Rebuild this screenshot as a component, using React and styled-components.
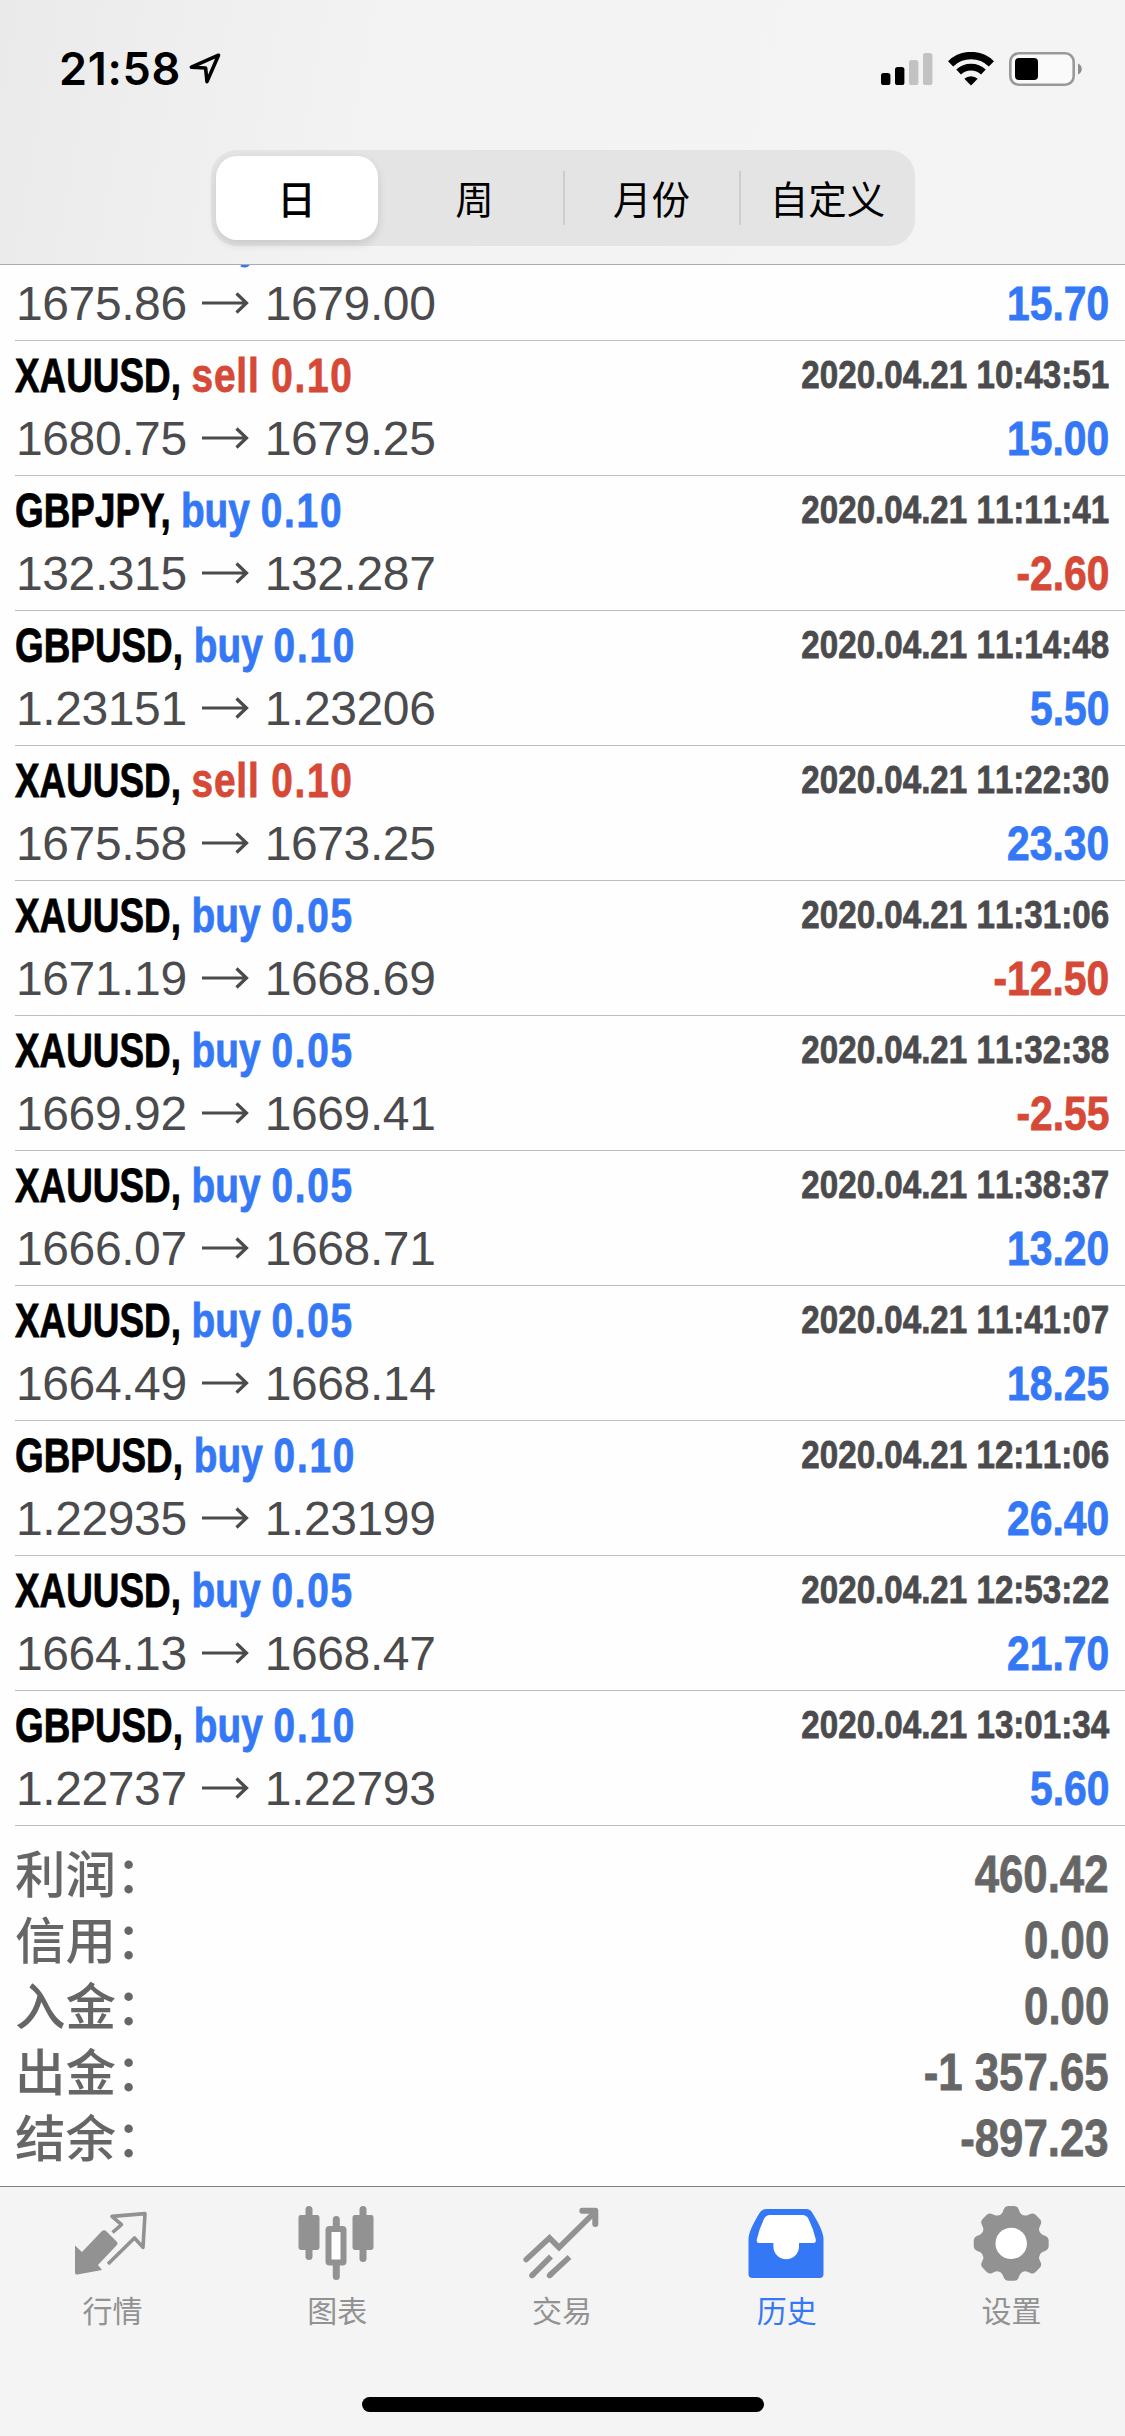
import React from "react";
import styled, { createGlobalStyle } from "styled-components";

const deals = [
  { symbol: "XAUUSD", side: "buy", volume: "0.05", open: "1675.86", close: "1679.00", time: "", profit: "15.70" },
  { symbol: "XAUUSD", side: "sell", volume: "0.10", open: "1680.75", close: "1679.25", time: "2020.04.21 10:43:51", profit: "15.00" },
  { symbol: "GBPJPY", side: "buy", volume: "0.10", open: "132.315", close: "132.287", time: "2020.04.21 11:11:41", profit: "-2.60" },
  { symbol: "GBPUSD", side: "buy", volume: "0.10", open: "1.23151", close: "1.23206", time: "2020.04.21 11:14:48", profit: "5.50" },
  { symbol: "XAUUSD", side: "sell", volume: "0.10", open: "1675.58", close: "1673.25", time: "2020.04.21 11:22:30", profit: "23.30" },
  { symbol: "XAUUSD", side: "buy", volume: "0.05", open: "1671.19", close: "1668.69", time: "2020.04.21 11:31:06", profit: "-12.50" },
  { symbol: "XAUUSD", side: "buy", volume: "0.05", open: "1669.92", close: "1669.41", time: "2020.04.21 11:32:38", profit: "-2.55" },
  { symbol: "XAUUSD", side: "buy", volume: "0.05", open: "1666.07", close: "1668.71", time: "2020.04.21 11:38:37", profit: "13.20" },
  { symbol: "XAUUSD", side: "buy", volume: "0.05", open: "1664.49", close: "1668.14", time: "2020.04.21 11:41:07", profit: "18.25" },
  { symbol: "GBPUSD", side: "buy", volume: "0.10", open: "1.22935", close: "1.23199", time: "2020.04.21 12:11:06", profit: "26.40" },
  { symbol: "XAUUSD", side: "buy", volume: "0.05", open: "1664.13", close: "1668.47", time: "2020.04.21 12:53:22", profit: "21.70" },
  { symbol: "GBPUSD", side: "buy", volume: "0.10", open: "1.22737", close: "1.22793", time: "2020.04.21 13:01:34", profit: "5.60" },
];

const totals = [
  { label: "利润", value: "460.42" },
  { label: "信用", value: "0.00" },
  { label: "入金", value: "0.00" },
  { label: "出金", value: "-1 357.65" },
  { label: "结余", value: "-897.23" },
];

const periods = ["日", "周", "月份", "自定义"];

const tabs = [
  { label: "行情", icon: <QuotesIcon /> },
  { label: "图表", icon: <ChartIcon /> },
  { label: "交易", icon: <TradeIcon /> },
  { label: "历史", icon: <HistoryIcon />, active: true },
  { label: "设置", icon: <SettingsIcon /> },
];

export default function App() {
  return (
    <Screen>
      <GlobalStyle />
      <Header>
        <StatusBar>
          <Clock>
            21:58
            <LocationIcon />
          </Clock>
          <Indicators>
            <SignalIcon />
            <WifiIcon />
            <BatteryIcon />
          </Indicators>
        </StatusBar>
        <Segments>
          {periods.map((period, i) => (
            <Segment key={period} $selected={i === 0} $divider={i > 1}>
              {period}
            </Segment>
          ))}
        </Segments>
      </Header>
      <History>
        <Deals>
          {deals.map((deal) => (
            <Deal key={deal.open}>
              <TitleLine>
                <Title>
                  <Symbol>{deal.symbol}, </Symbol>
                  <Side $sell={deal.side === "sell"}>
                    {deal.side} <Volume>{deal.volume}</Volume>
                  </Side>
                </Title>
                <Time>{deal.time}</Time>
              </TitleLine>
              <PriceLine>
                <Prices>
                  {deal.open}
                  <ArrowIcon />
                  {deal.close}
                </Prices>
                <Profit $loss={deal.profit.startsWith("-")}>{deal.profit}</Profit>
              </PriceLine>
            </Deal>
          ))}
        </Deals>
        <Totals>
          {totals.map((total) => (
            <Total key={total.label}>
              <TotalLabel>{total.label}：</TotalLabel>
              <TotalValue>{total.value}</TotalValue>
            </Total>
          ))}
        </Totals>
      </History>
      <TabBar>
        <TabList>
          {tabs.map((tab) => (
            <Tab key={tab.label} $active={tab.active}>
              {tab.icon}
              {tab.label}
            </Tab>
          ))}
        </TabList>
        <HomeIndicator />
      </TabBar>
    </Screen>
  );
}

function LocationIcon() {
  return (
    <svg width="32" height="32" viewBox="0 0 32 32" fill="none" stroke="#000" strokeWidth="3.6" strokeLinejoin="round">
      <path d="M29.5 3.2 L2.4 15.2 L16.6 16 L18 29.6 Z" />
    </svg>
  );
}

function SignalIcon() {
  return (
    <svg width="52" height="34" viewBox="0 0 52 34">
      <rect x="0" y="21" width="9.4" height="12" rx="2.6" fill="#000" />
      <rect x="14" y="15" width="9.4" height="18" rx="2.6" fill="#000" />
      <rect x="28" y="8" width="9.4" height="25" rx="2.6" fill="#c2c2c2" />
      <rect x="42" y="1" width="9.4" height="32" rx="2.6" fill="#c2c2c2" />
    </svg>
  );
}

function WifiIcon() {
  return (
    <svg width="46" height="34" viewBox="0 0 46 34" fill="none" stroke="#000">
      <path d="M2.6 11.8 A29.3 29.3 0 0 1 43.4 11.8" strokeWidth="7.4" />
      <path d="M10.6 20 A18 18 0 0 1 35.4 20" strokeWidth="6.8" />
      <path d="M16.3 26.8 A10 10 0 0 1 29.7 26.8 L23 33.6 Z" fill="#000" stroke="none" />
    </svg>
  );
}

function BatteryIcon() {
  return (
    <svg width="74" height="34" viewBox="0 0 74 34">
      <rect x="1.3" y="1.3" width="63.4" height="31.4" rx="8.5" fill="#fafafa" stroke="#999" strokeWidth="2.6" />
      <rect x="6" y="6" width="23" height="22" rx="4" fill="#000" />
      <path d="M69 11.5 C74 13.5 74 20.5 69 22.5 Z" fill="#8e8e8e" />
    </svg>
  );
}

function ArrowIcon() {
  return (
    <Arrow width="47" height="22" viewBox="0 0 47 22" fill="none" stroke="#4b4b4d" strokeWidth="3.2">
      <path d="M0 11 H44.5 M34.5 1.5 L44.5 11 L34.5 20.5" />
    </Arrow>
  );
}

function QuotesIcon() {
  return (
    <svg width="78" height="78" viewBox="0 0 78 78" fill="currentColor">
      <path d="M2 42.5 L9 49 L28.5 28.4 Q31 26 33.5 28.4 L43.6 38.4 Q45.4 40.5 43.4 42.6 L25 62 L29 67 L4.5 71.6 Q2 71.8 2 69.4 Z" />
      <path
        d="M39.5 29.5 L48.5 21.6 L39 13.4 L72 10.6 L70 44.4 L61.5 35 L35 61"
        fill="none"
        stroke="currentColor"
        strokeWidth="3.6"
        strokeLinejoin="round"
      />
    </svg>
  );
}

function ChartIcon() {
  return (
    <svg width="78" height="78" viewBox="0 0 78 78" fill="currentColor">
      <rect x="0.5" y="12" width="21" height="35" rx="2.4" />
      <rect x="7.5" y="3" width="7" height="54" rx="3.5" />
      <rect x="30.5" y="26" width="15" height="33.5" rx="1" fill="#fff" stroke="currentColor" strokeWidth="6" />
      <rect x="34.8" y="13" width="7" height="14" rx="3.5" />
      <rect x="34.8" y="58" width="7" height="19" rx="3.5" />
      <rect x="54.5" y="12" width="21" height="35" rx="2.4" />
      <rect x="61.5" y="3" width="7" height="56" rx="3.5" />
    </svg>
  );
}

function TradeIcon() {
  return (
    <svg width="78" height="78" viewBox="0 0 78 78" fill="none" stroke="currentColor" strokeWidth="5.6">
      <path d="M3.2 56.5 L26.5 35 L36 44.5 L70 11" strokeLinecap="round" />
      <path d="M59.3 7.8 H72.3 V21" strokeWidth="6" strokeLinecap="round" strokeLinejoin="round" />
      <path d="M9 72.4 L28 53.5 M26.6 72.4 L46.5 54" />
      <path d="M9 72.4 L10 71.4 M26.6 72.4 L27.6 71.4" strokeLinecap="round" />
    </svg>
  );
}

function HistoryIcon() {
  return (
    <svg width="78" height="78" viewBox="0 0 78 78" fill="currentColor">
      <path d="M19 6 H58 Q62.4 6 64.5 10 Q75.5 28 75.5 36 V71 Q75.5 75 71.5 75 H4.5 Q0.5 75 0.5 71 V36 Q0.5 28 11.5 10 Q13.6 6 19 6 Z" />
      <path
        d="M22 12 H54.5 Q58.5 12 60.3 15.5 Q65.5 26 67.8 36.5 Q68.3 40 65.5 40 H51 V43.5 A12.8 12.8 0 0 1 25.4 43.5 V40 H11 Q8.2 40 8.8 36.5 Q11 26 16.2 15.5 Q18 12 22 12 Z"
        fill="#fff"
      />
    </svg>
  );
}

function SettingsIcon() {
  return (
    <svg width="78" height="78" viewBox="0 0 78 78">
      <path d={gearPath(38.2, 40.4)} fill="currentColor" />
      <circle cx="38.2" cy="40.4" r="15.7" fill="#fff" />
    </svg>
  );
}

// Outline of an eight-toothed gear with soft tips and valleys
function gearPath(cx, cy) {
  const at = (radius, degrees) => {
    const angle = (degrees * Math.PI) / 180;
    return `${(cx + radius * Math.cos(angle)).toFixed(2)} ${(cy + radius * Math.sin(angle)).toFixed(2)}`;
  };
  let d = `M${at(32, -16)}`;
  for (let a = 0; a < 360; a += 45) {
    d += ` L${at(35.2, a - 12)} Q${at(37.6, a - 10)} ${at(37.6, a - 5)}`;
    d += ` L${at(37.6, a + 5)} Q${at(37.6, a + 10)} ${at(35.2, a + 12)}`;
    d += ` L${at(32, a + 16)} Q${at(29.3, a + 22.5)} ${at(32, a + 29)}`;
  }
  return `${d} Z`;
}

const GlobalStyle = createGlobalStyle`
  body {
    margin: 0;
    background: #fefefe;
  }
`;

const Screen = styled.div`
  display: flex;
  flex-direction: column;
  width: 1125px;
  height: 2436px;
  overflow: hidden;
  background: #fefefe;
  font-family: "Liberation Sans", "Noto Sans CJK SC", sans-serif;
  font-kerning: none;
`;

const Header = styled.header`
  box-sizing: border-box;
  display: flex;
  flex-direction: column;
  align-items: center;
  flex: none;
  height: 265px;
  border-bottom: 1px solid #ababad;
  background: linear-gradient(100deg, #eaeaea 0%, #eeeeee 14%, #f3f3f3 34%, #f4f4f5 100%);
`;

const StatusBar = styled.div`
  box-sizing: border-box;
  display: flex;
  justify-content: space-between;
  width: 100%;
  height: 150px;
  padding: 52px 42px 0 59px;
`;

const Clock = styled.div`
  display: flex;
  gap: 8px;
  height: 34px;
  line-height: 34px;
  font-family: Inter, sans-serif;
  font-size: 45px;
  font-weight: 600;
  letter-spacing: 0.7px;
`;

const Indicators = styled.div`
  display: flex;
  gap: 15px;
`;

const Segments = styled.div`
  box-sizing: border-box;
  display: grid;
  grid-template-columns: repeat(4, 176px);
  grid-template-rows: 84px;
  width: 704px;
  height: 96px;
  padding: 6px 0;
  border-radius: 26px;
  background: #e4e4e5;
`;

const Segment = styled.div`
  box-sizing: border-box;
  display: flex;
  align-items: center;
  justify-content: center;
  margin: ${(props) => (props.$selected ? "0 9px 0 5px" : "15px 0")};
  padding-bottom: 3px;
  border-left: ${(props) => (props.$divider ? "2px solid #cdcdcf" : "none")};
  border-radius: ${(props) => (props.$selected ? "21px" : "0")};
  background: ${(props) => (props.$selected ? "#fff" : "transparent")};
  box-shadow: ${(props) => (props.$selected ? "0 4px 10px rgba(0, 0, 0, 0.12)" : "none")};
  font-family: "Noto Sans CJK SC", sans-serif;
  font-size: 38.5px;
  font-weight: ${(props) => (props.$selected ? 500 : 400)};
  line-height: 44px;
  color: #000;
`;

const History = styled.main`
  display: flex;
  flex-direction: column;
  flex: none;
  height: 1921px;
  overflow: hidden;
`;

/* the list is scrolled so that only the lower line of the first deal shows */
const Deals = styled.div`
  margin: -59px 0 0 15px;
`;

const Deal = styled.div`
  box-sizing: border-box;
  height: 135px;
  padding-right: 16px;
  border-bottom: 1px solid #bcbcbe;
`;

const TitleLine = styled.div`
  display: flex;
  justify-content: space-between;
  height: 68px;
  line-height: 68px;
  white-space: pre;
`;

const PriceLine = styled(TitleLine)`
  height: 60px;
  line-height: 60px;
`;

const Condensed = styled.div`
  font-weight: bold;
  transform: scaleX(0.85);
  transform-origin: right;
  -webkit-text-stroke: 0.8px;
`;

const Title = styled(Condensed)`
  font-size: 48.5px;
  transform: scaleX(0.8);
  transform-origin: left;
`;

const Symbol = styled.span`
  display: inline-block;
  margin-right: -11px;
  color: #000;
  font-kerning: normal;
  transform: scaleX(0.95);
  transform-origin: left;
`;

const Side = styled.span`
  color: ${(props) => (props.$sell ? "#d54936" : "#3478f6")};
  letter-spacing: ${(props) => (props.$sell ? "1px" : "0")};
`;

const Volume = styled.span`
  letter-spacing: 2.2px;
`;

const Time = styled(Condensed)`
  font-size: 39px;
  color: #4b4b4d;
`;

const Prices = styled.div`
  padding-left: 1px;
  font-size: 48px;
  letter-spacing: -0.4px;
  color: #4b4b4d;
`;

const Arrow = styled.svg`
  margin: 0 16px 0 15px;
  vertical-align: 6px;
`;

const Profit = styled(Condensed)`
  font-size: 48px;
  color: ${(props) => (props.$loss ? "#d54936" : "#3478f6")};
`;

const Totals = styled.div`
  padding: 15px 16px 15px 15px;
`;

const Total = styled.div`
  display: flex;
  justify-content: space-between;
  height: 66px;
  line-height: 66px;
  font-size: 51.5px;
  color: #666;
`;

const TotalLabel = styled.div`
  font-family: "Noto Sans CJK SC", sans-serif;
  font-size: 50.5px;
  font-weight: 500;
  line-height: 60px;
`;

const TotalValue = styled(Condensed)`
  white-space: pre;
`;

const TabBar = styled.footer`
  box-sizing: border-box;
  display: flex;
  flex-direction: column;
  align-items: center;
  justify-content: space-between;
  flex: 1;
  padding-bottom: 24px;
  border-top: 1px solid #808080;
  background: #f4f4f4;
`;

const TabList = styled.nav`
  box-sizing: border-box;
  display: flex;
  width: 100%;
  padding: 16px 1px 0 0;
`;

const Tab = styled.div`
  display: flex;
  flex: 1;
  flex-direction: column;
  align-items: center;
  gap: 7px;
  font-family: "Noto Sans CJK SC", sans-serif;
  font-size: 30px;
  line-height: 42px;
  color: ${(props) => (props.$active ? "#3478f6" : "#929292")};
`;

const HomeIndicator = styled.div`
  width: 402px;
  height: 15px;
  border-radius: 8px;
  background: #000;
`;
